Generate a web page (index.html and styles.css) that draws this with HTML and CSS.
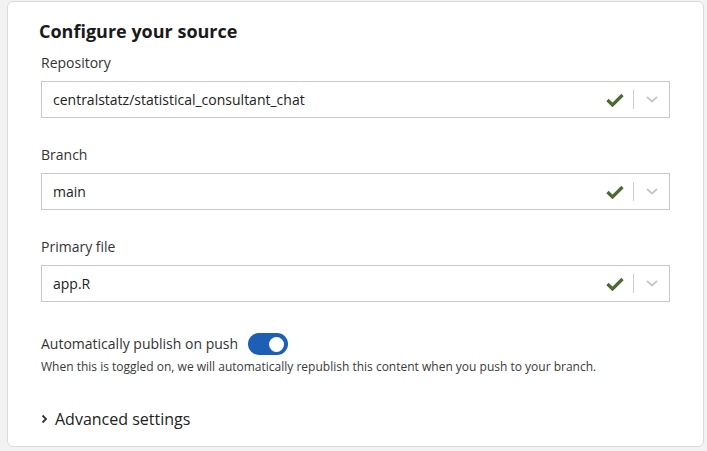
FILE: index.html
```html
<!DOCTYPE html>
<html lang="en">
<head>
  <meta charset="UTF-8">
  <title>Configure your source</title>
  <link rel="stylesheet" href="styles.css">
</head>
<body>
  <div class="page">
    <div class="card">
      <h2>Configure your source</h2>

      <div class="field">
        <label>Repository</label>
        <div class="select">
          <span class="value">centralstatz/statistical_consultant_chat</span>
          <svg class="check" width="18" height="14" viewBox="0 0 18 14"><path d="M1.5 7 L6.5 12 L16.5 2" /></svg>
          <span class="sep"></span>
          <svg class="caret" width="12" height="7" viewBox="0 0 12 7"><path d="M1 1 L6 5.5 L11 1" /></svg>
        </div>
      </div>

      <div class="field">
        <label>Branch</label>
        <div class="select">
          <span class="value">main</span>
          <svg class="check" width="18" height="14" viewBox="0 0 18 14"><path d="M1.5 7 L6.5 12 L16.5 2" /></svg>
          <span class="sep"></span>
          <svg class="caret" width="12" height="7" viewBox="0 0 12 7"><path d="M1 1 L6 5.5 L11 1" /></svg>
        </div>
      </div>

      <div class="field">
        <label>Primary file</label>
        <div class="select">
          <span class="value">app.R</span>
          <svg class="check" width="18" height="14" viewBox="0 0 18 14"><path d="M1.5 7 L6.5 12 L16.5 2" /></svg>
          <span class="sep"></span>
          <svg class="caret" width="12" height="7" viewBox="0 0 12 7"><path d="M1 1 L6 5.5 L11 1" /></svg>
        </div>
      </div>

      <div class="toggle-row">
        <span>Automatically publish on push</span>
        <span class="toggle"><span class="knob"></span></span>
      </div>
      <p class="hint">When this is toggled on, we will automatically republish this content when you push to your branch.</p>

      <div class="advanced">
        <svg width="7" height="10" viewBox="0 0 7 10"><path d="M1.5 1.5 L5 5 L1.5 8.5" /></svg>
        <span>Advanced settings</span>
      </div>
    </div>
  </div>
</body>
</html>
```

FILE: styles.css
```css
body {
  margin: 0;
  background-color: #f2f2f2;
  font-family: "Open Sans", "Liberation Sans", sans-serif;
  color: #333;
}

.page {
  padding: 1px 3px 0 7px;
}

.card {
  background-color: #fff;
  border: 1px solid #dadada;
  border-radius: 6px;
  padding: 17px 33px 16px 33px;
}

h2 {
  margin: 0 0 10px -2px;
  font-size: 18px;
  line-height: 24px;
  font-weight: 700;
  color: #1a1a1a;
}

.field {
  margin-bottom: 27px;
}

.field label {
  display: block;
  font-size: 14px;
  line-height: 20px;
  margin-bottom: 8px;
  color: #333;
}

.select {
  display: flex;
  align-items: center;
  height: 37px;
  box-sizing: border-box;
  border: 1px solid #c9c9c9;
  padding: 0 11px 0 11px;
}

.select .value {
  flex: 1;
  font-size: 14px;
  color: #222;
}

.check path {
  fill: none;
  stroke: #4b6a2f;
  stroke-width: 3.2;
}

.sep {
  width: 1px;
  height: 19px;
  background-color: #cfcfcf;
  margin: 0 12px 0 9px;
}

.caret path {
  fill: none;
  stroke: #c6c6c6;
  stroke-width: 1.8;
}

.toggle-row {
  display: flex;
  align-items: center;
  gap: 10px;
  margin-top: 31px;
  font-size: 14px;
  line-height: 20px;
}

.toggle {
  display: flex;
  align-items: center;
  justify-content: flex-end;
  width: 40px;
  height: 22px;
  box-sizing: border-box;
  padding-right: 4px;
  border-radius: 11px;
  background-color: #1c5fb5;
}

.knob {
  width: 15px;
  height: 15px;
  border-radius: 50%;
  background-color: #fff;
}

.hint {
  margin: 4px 0 0 0;
  font-size: 12px;
  line-height: 16px;
  color: #3a3a3a;
}

.advanced {
  display: flex;
  align-items: center;
  gap: 7px;
  margin-top: 33px;
  font-size: 16px;
  line-height: 22px;
  color: #222;
}

.advanced svg path {
  fill: none;
  stroke: #333;
  stroke-width: 1.8;
}
```
